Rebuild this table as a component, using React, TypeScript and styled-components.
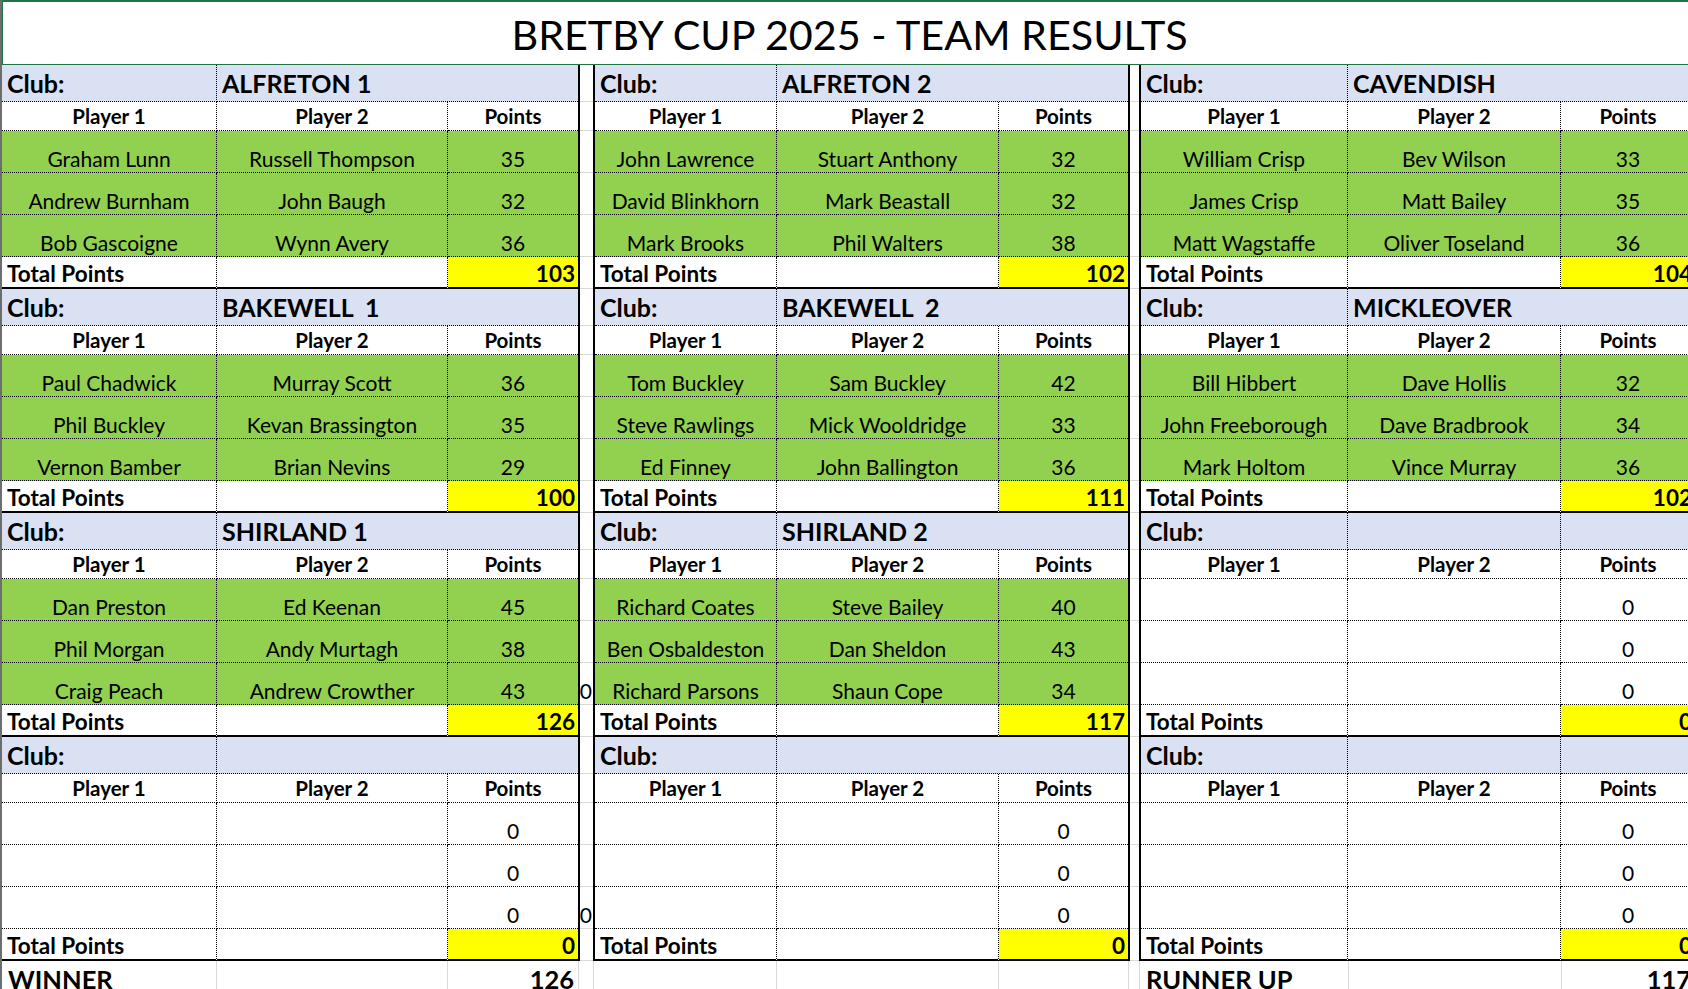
import React from "react";
import styled, { createGlobalStyle, css } from "styled-components";

const FONT = `Lato, "Open Sans", "Liberation Sans", sans-serif`;

const GlobalStyle = createGlobalStyle`
  html, body { margin: 0; padding: 0; background: #ffffff; overflow: hidden; }
  body { font-family: ${FONT}; color: #000; }
  #root { width: 1688px; height: 989px; overflow: hidden; }
`;

type Pair = { p1: string; p2: string; pts: number };
type Team = { club: string; rows: Pair[]; total: number; merged: boolean; filled: boolean; gap?: boolean[] };

const H = { club: 37, head: 29, data: 42, total: 32 };

const empty = (merged: boolean, gap?: boolean[]): Team => ({
  club: "",
  rows: [
    { p1: "", p2: "", pts: 0 },
    { p1: "", p2: "", pts: 0 },
    { p1: "", p2: "", pts: 0 },
  ],
  total: 0,
  merged,
  filled: false,
  gap,
});

const team = (club: string, rows: [string, string, number][], total: number, gap?: boolean[]): Team => ({
  club,
  rows: rows.map(([p1, p2, pts]) => ({ p1, p2, pts })),
  total,
  merged: true,
  filled: true,
  gap,
});

const LEFT: Team[] = [
  team("ALFRETON 1", [["Graham Lunn", "Russell Thompson", 35], ["Andrew Burnham", "John Baugh", 32], ["Bob Gascoigne", "Wynn Avery", 36]], 103),
  team("BAKEWELL  1", [["Paul Chadwick", "Murray Scott", 36], ["Phil Buckley", "Kevan Brassington", 35], ["Vernon Bamber", "Brian Nevins", 29]], 100),
  team("SHIRLAND 1", [["Dan Preston", "Ed Keenan", 45], ["Phil Morgan", "Andy Murtagh", 38], ["Craig Peach", "Andrew Crowther", 43]], 126, [false, false, true]),
  empty(true, [false, false, true]),
];

const MIDDLE: Team[] = [
  team("ALFRETON 2", [["John Lawrence", "Stuart Anthony", 32], ["David Blinkhorn", "Mark Beastall", 32], ["Mark Brooks", "Phil Walters", 38]], 102),
  team("BAKEWELL  2", [["Tom Buckley", "Sam Buckley", 42], ["Steve Rawlings", "Mick Wooldridge", 33], ["Ed Finney", "John Ballington", 36]], 111),
  team("SHIRLAND 2", [["Richard Coates", "Steve Bailey", 40], ["Ben Osbaldeston", "Dan Sheldon", 43], ["Richard Parsons", "Shaun Cope", 34]], 117),
  empty(true),
];

const RIGHT: Team[] = [
  team("CAVENDISH", [["William Crisp", "Bev Wilson", 33], ["James Crisp", "Matt Bailey", 35], ["Matt Wagstaffe", "Oliver Toseland", 36]], 104),
  team("MICKLEOVER", [["Bill Hibbert", "Dave Hollis", 32], ["John Freeborough", "Dave Bradbrook", 34], ["Mark Holtom", "Vince Murray", 36]], 102),
  empty(false),
  empty(false),
];

const Sheet = styled.div`
  width: 1688px;
  height: 989px;
  overflow: hidden;
  display: flex;
  align-items: flex-start;
  background: #ffffff;
`;

const RowHeaderEdge = styled.div`
  flex: none;
  align-self: stretch;
  width: 2px;
  background: #6d6d6d;
`;

const Grid = styled.div`
  flex: none;
  width: 1694px;
  display: flex;
  flex-direction: column;
  & > * {
    flex: none;
  }
`;

const TitleCell = styled.div`
  box-sizing: border-box;
  height: 65px;
  border-top: 2px solid #217346;
  border-bottom: 1px solid #217346;
  border-left: 1px solid #217346;
  display: flex;
  align-items: flex-end;
  justify-content: center;
  font-size: 41.3px;
  line-height: 1.2;
  padding-bottom: 4px;
  white-space: nowrap;
`;

const Panels = styled.div`
  display: flex;
  align-items: stretch;
`;

const Panel = styled.div<{ $leftEdge?: boolean; $rightEdge?: boolean }>`
  flex: none;
  display: flex;
  flex-direction: column;
  ${(p) => p.$leftEdge && css`border-left: 2px solid #000;`}
  ${(p) => p.$rightEdge && css`border-right: 2px solid #000;`}
`;

const Gap = styled.div<{ $w: number }>`
  flex: none;
  width: ${(p) => p.$w}px;
  display: flex;
  flex-direction: column;
`;

const GapCell = styled.div<{ $h: number }>`
  box-sizing: border-box;
  flex: none;
  height: ${(p) => p.$h}px;
  border-bottom: 1px solid #dadada;
  display: flex;
  align-items: flex-end;
  justify-content: flex-end;
  font-size: 21px;
  line-height: 1.2;
  padding: 0 1px 1px 0;
  overflow: hidden;
`;

const Row = styled.div<{ $cols: string; $h: number; $fill?: string }>`
  flex: none;
  display: grid;
  grid-template-columns: ${(p) => p.$cols};
  height: ${(p) => p.$h}px;
  background: ${(p) => p.$fill ?? "transparent"};
`;

const BaseCell = styled.div<{ $edge?: boolean }>`
  box-sizing: border-box;
  min-width: 0;
  overflow: hidden;
  white-space: pre;
  display: flex;
  align-items: flex-end;
  line-height: 1.2;
  border-bottom: 1px dotted #000;
  border-right: ${(p) => (p.$edge ? "none" : "1px dotted #000")};
`;

const ClubCell = styled(BaseCell)<{ $span?: number }>`
  grid-column: span ${(p) => p.$span ?? 1};
  font-size: 25px;
  font-weight: 700;
  padding: 0 4px 3px 5px;
`;

const HeadCell = styled(BaseCell)`
  justify-content: center;
  font-size: 20.5px;
  font-weight: 700;
  padding-bottom: 1px;
`;

const DataCell = styled(BaseCell)`
  justify-content: center;
  font-size: 21px;
  padding-bottom: 1px;
`;

const TotalCell = styled(BaseCell)<{ $hi?: boolean; $right?: boolean }>`
  font-size: 22.5px;
  font-weight: 700;
  padding: 0 3px 0 5px;
  border-bottom: 2px solid #000;
  justify-content: ${(p) => (p.$right ? "flex-end" : "flex-start")};
  background: ${(p) => (p.$hi ? "#ffff00" : "transparent")};
`;

const WinnerRow = styled.div`
  display: flex;
  height: 40px;
`;

const WinnerCell = styled.div<{ $w: number; $right?: boolean }>`
  flex: none;
  width: ${(p) => p.$w}px;
  box-sizing: border-box;
  border-right: 1px solid #dadada;
  display: flex;
  align-items: flex-start;
  justify-content: ${(p) => (p.$right ? "flex-end" : "flex-start")};
  font-size: 25.5px;
  font-weight: 700;
  line-height: 1.2;
  padding: 3px 4px 0 6px;
  white-space: nowrap;
  overflow: hidden;
`;

const colsOf = (w: number[]) => w.map((x) => `${x}px`).join(" ");

function TeamBlock({ t, cols }: { t: Team; cols: string }) {
  const fill = t.filled ? "#92d050" : undefined;
  return (
    <>
      <Row $cols={cols} $h={H.club} $fill="#d9e1f2">
        <ClubCell>Club:</ClubCell>
        {t.merged ? (
          <ClubCell $span={2} $edge>
            {t.club}
          </ClubCell>
        ) : (
          <>
            <ClubCell>{t.club}</ClubCell>
            <ClubCell $edge />
          </>
        )}
      </Row>
      <Row $cols={cols} $h={H.head}>
        <HeadCell>Player 1</HeadCell>
        <HeadCell>Player 2</HeadCell>
        <HeadCell $edge>Points</HeadCell>
      </Row>
      {t.rows.map((r, i) => (
        <Row key={i} $cols={cols} $h={H.data} $fill={fill}>
          <DataCell>{r.p1}</DataCell>
          <DataCell>{r.p2}</DataCell>
          <DataCell $edge>{r.pts}</DataCell>
        </Row>
      ))}
      <Row $cols={cols} $h={H.total}>
        <TotalCell>Total Points</TotalCell>
        <TotalCell />
        <TotalCell $edge $hi $right>
          {t.total}
        </TotalCell>
      </Row>
    </>
  );
}

function TeamPanel({ teams, widths, leftEdge, rightEdge }: { teams: Team[]; widths: number[]; leftEdge?: boolean; rightEdge?: boolean }) {
  const cols = colsOf(widths);
  return (
    <Panel $leftEdge={leftEdge} $rightEdge={rightEdge}>
      {teams.map((t, i) => (
        <TeamBlock key={i} t={t} cols={cols} />
      ))}
    </Panel>
  );
}

function GapColumn({ w, teams }: { w: number; teams: Team[] }) {
  return (
    <Gap $w={w}>
      {teams.map((t, i) => (
        <React.Fragment key={i}>
          <GapCell $h={H.club} />
          <GapCell $h={H.head} />
          {[0, 1, 2].map((r) => (
            <GapCell key={r} $h={H.data}>
              {t.gap && t.gap[r] ? "0" : ""}
            </GapCell>
          ))}
          <GapCell $h={H.total} />
        </React.Fragment>
      ))}
    </Gap>
  );
}

export default function App() {
  return (
    <>
      <GlobalStyle />
      <Sheet>
        <RowHeaderEdge />
        <Grid>
          <TitleCell>BRETBY CUP 2025 - TEAM RESULTS</TitleCell>
          <Panels>
            <TeamPanel teams={LEFT} widths={[215, 231, 130]} rightEdge />
            <GapColumn w={13} teams={LEFT} />
            <TeamPanel teams={MIDDLE} widths={[182, 222, 129]} leftEdge rightEdge />
            <GapColumn w={9} teams={MIDDLE} />
            <TeamPanel teams={RIGHT} widths={[207, 213, 134]} leftEdge />
          </Panels>
          <WinnerRow>
            <WinnerCell $w={215}>WINNER</WinnerCell>
            <WinnerCell $w={231} />
            <WinnerCell $w={131} $right>126</WinnerCell>
            <WinnerCell $w={15} />
            <WinnerCell $w={183} />
            <WinnerCell $w={222} />
            <WinnerCell $w={130} />
            <WinnerCell $w={10} />
            <WinnerCell $w={209}>RUNNER UP</WinnerCell>
            <WinnerCell $w={213} />
            <WinnerCell $w={134} $right>117</WinnerCell>
          </WinnerRow>
        </Grid>
      </Sheet>
    </>
  );
}
